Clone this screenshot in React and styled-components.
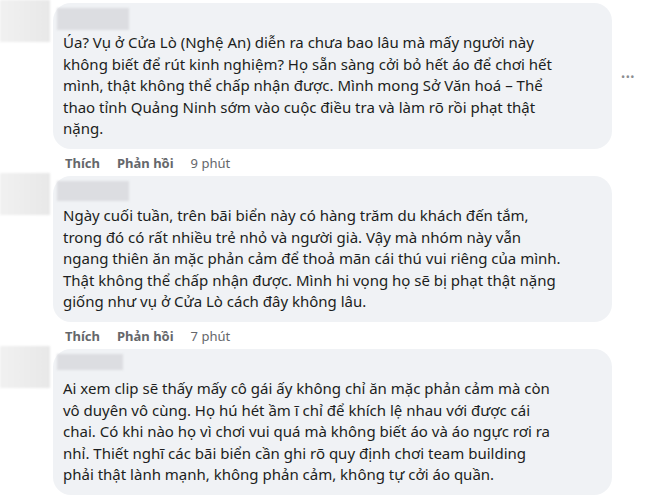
import React from 'react'
import styled, { createGlobalStyle } from 'styled-components'

const GlobalStyle = createGlobalStyle`
  html, body {
    margin: 0;
    padding: 0;
    background: #ffffff;
    overflow: hidden;
  }
`

// the third comment's action row falls below the visible area, so it has no time
const comments = [
  {
    nameWidth: 72,
    nameHeight: 22,
    time: '9 phút',
    more: true,
    lines: [
      'Úa? Vụ ở Cửa Lò (Nghệ An) diễn ra chưa bao lâu mà mấy người này',
      'không biết để rút kinh nghiệm? Họ sẵn sàng cởi bỏ hết áo để chơi hết',
      'mình, thật không thể chấp nhận được. Mình mong Sở Văn hoá – Thể',
      'thao tỉnh Quảng Ninh sớm vào cuộc điều tra và làm rõ rồi phạt thật',
      'nặng.',
    ],
  },
  {
    nameWidth: 72,
    nameHeight: 20,
    time: '7 phút',
    lines: [
      'Ngày cuối tuần, trên bãi biển này có hàng trăm du khách đến tắm,',
      'trong đó có rất nhiều trẻ nhỏ và người già. Vậy mà nhóm này vẫn',
      'ngang thiên ăn mặc phản cảm để thoả mãn cái thú vui riêng của mình.',
      'Thật không thể chấp nhận được. Mình hi vọng họ sẽ bị phạt thật nặng',
      'giống như vụ ở Cửa Lò cách đây không lâu.',
    ],
  },
  {
    nameWidth: 66,
    nameHeight: 16,
    lines: [
      'Ai xem clip sẽ thấy mấy cô gái ấy không chỉ ăn mặc phản cảm mà còn',
      'vô duyên vô cùng. Họ hú hét ầm ĩ chỉ để khích lệ nhau với được cái',
      'chai. Có khi nào họ vì chơi vui quá mà không biết áo và áo ngực rơi ra',
      'nhỉ. Thiết nghĩ các bãi biển cần ghi rõ quy định chơi team building',
      'phải thật lành mạnh, không phản cảm, không tự cởi áo quần.',
    ],
  },
]

const Page = styled.div`
  display: flex;
  flex-direction: column;
  gap: 2px;
  width: 660px;
  height: 502px;
  font-family: "Noto Sans", "Open Sans", sans-serif;
  color: #1c1e21;
`

const Comment = styled.div`
  display: flex;
  align-items: flex-start;
  gap: 3px;
`

const Avatar = styled.div`
  flex: none;
  width: 50px;
  height: 42px;
  background: linear-gradient(90deg, #f1f1f1, #e8e8e8);
  filter: blur(1px);
`

const Body = styled.div`
  display: flex;
  flex-direction: column;
  padding-top: 3px;
`

const BubbleRow = styled.div`
  display: flex;
  align-items: center;
`

const Bubble = styled.div`
  width: 559px;
  height: 146px;
  box-sizing: border-box;
  padding: 5px 12px 0 4px;
  background: #f0f2f5;
  border-radius: 18px;
`

const NameBlur = styled.div`
  width: ${p => p.$w}px;
  height: ${p => p.$h}px;
  margin-bottom: ${p => 24 - p.$h}px;
  background: #dcdde1;
  filter: blur(0.8px);
`

const Text = styled.div`
  padding-left: 6px;
  font-size: 15px;
  line-height: 21.6px;
  white-space: nowrap;
  span {
    display: block;
  }
`

const More = styled.div`
  margin-left: 9px;
  color: #8a8d91;
  font-size: 11px;
  letter-spacing: 0.5px;
  visibility: ${p => (p.$show ? 'visible' : 'hidden')};
`

const Actions = styled.div`
  display: flex;
  gap: 17px;
  margin-top: 6px;
  padding-left: 12px;
  font-size: 13px;
  line-height: 16px;
  color: #65676b;
`

const Action = styled.span`
  font-weight: ${p => (p.$bold ? 700 : 400)};
`

export default function App() {
  return (
    <>
      <GlobalStyle />
      <Page>
        {comments.map((c, i) => (
          <Comment key={i}>
            <Avatar />
            <Body>
              <BubbleRow>
                <Bubble>
                  <NameBlur $w={c.nameWidth} $h={c.nameHeight} />
                  <Text>
                    {c.lines.map((l, j) => (
                      <span key={j}>{l}</span>
                    ))}
                  </Text>
                </Bubble>
                <More $show={c.more}>•••</More>
              </BubbleRow>
              {c.time && (
                <Actions>
                  <Action $bold>Thích</Action>
                  <Action $bold>Phản hồi</Action>
                  <Action>{c.time}</Action>
                </Actions>
              )}
            </Body>
          </Comment>
        ))}
      </Page>
    </>
  )
}
